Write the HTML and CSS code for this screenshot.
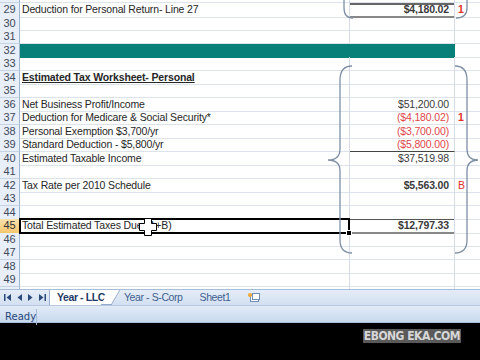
FILE: index.html
```html
<!DOCTYPE html>
<html lang="en">
<head>
    <meta charset="UTF-8">
    <title>Estimated Tax Worksheet</title>
    <link rel="stylesheet" href="styles.css">
</head>
<body>
    <div class="sheet">
        <div class="rows">
            <div class="row"><div class="rh"></div><div class="c a"></div><div class="c b"></div><div class="c x"></div></div>
            <div class="row"><div class="rh">29</div><div class="c a">Deduction for Personal Return- Line 27</div><div class="c b bold line-top2 line-bot2">$4,180.02</div><div class="c x red bold">1</div></div>
            <div class="row"><div class="rh">30</div><div class="c a"></div><div class="c b"></div><div class="c x"></div></div>
            <div class="row"><div class="rh">31</div><div class="c a"></div><div class="c b"></div><div class="c x"></div></div>
            <div class="row teal"><div class="rh">32</div><div class="c a"></div><div class="c b"></div><div class="c x"></div></div>
            <div class="row"><div class="rh">33</div><div class="c a"></div><div class="c b"></div><div class="c x"></div></div>
            <div class="row"><div class="rh">34</div><div class="c a bold under">Estimated Tax Worksheet- Personal</div><div class="c b"></div><div class="c x"></div></div>
            <div class="row"><div class="rh">35</div><div class="c a"></div><div class="c b"></div><div class="c x"></div></div>
            <div class="row"><div class="rh">36</div><div class="c a">Net Business Profit/Income</div><div class="c b">$51,200.00</div><div class="c x"></div></div>
            <div class="row"><div class="rh">37</div><div class="c a">Deduction for Medicare &amp; Social Security*</div><div class="c b neg">($4,180.02)</div><div class="c x red bold">1</div></div>
            <div class="row"><div class="rh">38</div><div class="c a">Personal Exemption $3,700/yr</div><div class="c b neg">($3,700.00)</div><div class="c x"></div></div>
            <div class="row"><div class="rh">39</div><div class="c a">Standard Deduction - $5,800/yr</div><div class="c b neg line-bot1">($5,800.00)</div><div class="c x"></div></div>
            <div class="row"><div class="rh">40</div><div class="c a">Estimated Taxable Income</div><div class="c b">$37,519.98</div><div class="c x"></div></div>
            <div class="row"><div class="rh">41</div><div class="c a"></div><div class="c b"></div><div class="c x"></div></div>
            <div class="row"><div class="rh">42</div><div class="c a">Tax Rate per 2010 Schedule</div><div class="c b bold">$5,563.00</div><div class="c x red">B</div></div>
            <div class="row"><div class="rh">43</div><div class="c a"></div><div class="c b"></div><div class="c x"></div></div>
            <div class="row"><div class="rh">44</div><div class="c a"></div><div class="c b"></div><div class="c x"></div></div>
            <div class="row active"><div class="rh">45</div><div class="c a selected">Total Estimated Taxes Due (A+B)</div><div class="c b bold line-top1 line-bot2">$12,797.33</div><div class="c x"></div></div>
            <div class="row"><div class="rh">46</div><div class="c a"></div><div class="c b"></div><div class="c x"></div></div>
            <div class="row"><div class="rh">47</div><div class="c a"></div><div class="c b"></div><div class="c x"></div></div>
            <div class="row"><div class="rh">48</div><div class="c a"></div><div class="c b"></div><div class="c x"></div></div>
            <div class="row"><div class="rh">49</div><div class="c a"></div><div class="c b"></div><div class="c x"></div></div>
            <div class="row"><div class="rh">50</div><div class="c a"></div><div class="c b"></div><div class="c x"></div></div>
        </div>

        <!-- hand-drawn braces and the mouse pointer -->
        <svg class="marks" width="480" height="289" viewBox="0 0 480 289">
            <g fill="none" stroke="#7f90a6" stroke-width="1.3">
                <path d="M344,-20 L344,8 Q344,18 353,18"/>
                <path d="M467,-20 L467,8 Q467,18 456,18"/>
                <path d="M352,66 Q340,66 340,80 L340,149 Q340,160 328,160 Q340,160 340,171 L340,240 Q340,253 352,253"/>
                <path d="M455,66 Q467,66 467,80 L467,149 Q467,160 478,160 Q467,160 467,171 L467,240 Q467,253 455,253"/>
            </g>
            <path class="cursor" d="M144.5,218.5 h7 v5 h5 v7 h-5 v5 h-7 v-5 h-5 v-7 h5 z"/>
        </svg>
    </div>

    <div class="tabbar">
        <div class="nav">
            <svg width="7" height="7" viewBox="0 0 7 7"><path d="M0,0 h1.5 v7 h-1.5 z M7,0 v7 l-4.5,-3.5 z"/></svg>
            <svg width="5" height="7" viewBox="0 0 5 7"><path d="M5,0 v7 l-4.5,-3.5 z"/></svg>
            <svg width="5" height="7" viewBox="0 0 5 7"><path d="M0,0 v7 l4.5,-3.5 z"/></svg>
            <svg width="7" height="7" viewBox="0 0 7 7"><path d="M0,0 v7 l4.5,-3.5 z M5.5,0 h1.5 v7 h-1.5 z"/></svg>
        </div>
        <div class="tabs">
            <div class="tab current">Year - LLC</div>
            <div class="tab">Year - S-Corp</div>
            <div class="tab">Sheet1</div>
            <div class="tab add">
                <svg width="13" height="11" viewBox="0 0 13 11">
                    <rect x="3.5" y="3.5" width="8" height="6" fill="#fff" stroke="#6f8cb2"/>
                    <rect x="5.5" y="1.5" width="7" height="6" fill="#fff" stroke="#6f8cb2"/>
                    <circle cx="3" cy="3" r="2" fill="#f0a830"/>
                </svg>
            </div>
        </div>
    </div>

    <div class="status">
        <span class="ready">Ready</span>
    </div>

    <div class="letterbox">
        <span class="watermark">EBONG EKA.COM</span>
    </div>
</body>
</html>
```

FILE: styles.css
```css
body {
    margin: 0;
    width: 480px;
    height: 360px;
    overflow: hidden;
    background-color: black;
    font-family: "Liberation Sans", Arial, sans-serif;
}

.sheet {
    position: relative;
    height: 289px;
    overflow: hidden;
    background-color: white;
}

.rows {
    margin-top: -10.5px;
}

.row {
    display: grid;
    grid-template-columns: 20px 330px 105px 25px;
    height: 13.5px;
}

.rh {
    box-sizing: border-box;
    background-color: #e9eff8;
    border-right: 1px solid #9eb6ce;
    border-bottom: 1px solid #c5d3e4;
    color: #3e4a5c;
    font-size: 11px;
    line-height: 13px;
    text-align: center;
}

.c {
    box-sizing: border-box;
    border-bottom: 1px solid #dde3ec;
    color: #262626;
    font-size: 10.5px;
    letter-spacing: -0.15px;
    line-height: 12.5px;
    white-space: nowrap;
}

.a {
    padding-left: 2px;
    border-right: 1px solid #d6dce6;
}

.b {
    padding-right: 5px;
    text-align: right;
    border-right: 1px solid #d6dce6;
    color: #3a3a3a;
}

.x {
    padding-left: 3px;
}

.bold {
    font-weight: bold;
}

.under {
    text-decoration: underline;
}

.red {
    color: #e0302c;
}

.neg {
    color: #e0474a;
}

.line-top1 {
    box-shadow: inset 0 1px 0 #555;
}

.line-top2 {
    box-shadow: inset 0 2px 0 #666;
}

.line-bot1 {
    border-bottom-color: #444;
}

.line-bot2 {
    border-bottom: 2px solid #888;
}

.teal .a,
.teal .b {
    background-color: #07807a;
    border-color: #07807a;
}

.active .rh {
    background: linear-gradient(#fbe2ad, #f4c66e);
    color: #333;
}

.selected {
    position: relative;
}

.selected::after {
    content: "";
    position: absolute;
    top: -1px;
    left: -1px;
    right: -1px;
    bottom: -1px;
    border: 2px solid #000;
}

.selected::before {
    content: "";
    position: absolute;
    right: -3px;
    bottom: -3px;
    width: 4px;
    height: 4px;
    background-color: #000;
    border: 1px solid #fff;
    z-index: 1;
}

.marks {
    position: absolute;
    top: 0;
    left: 0;
    pointer-events: none;
}

.cursor {
    fill: #fff;
    stroke: #000;
    stroke-width: 1;
}

/* sheet tabs */
.tabbar {
    display: flex;
    height: 17px;
    box-sizing: border-box;
    background: linear-gradient(#e4ecf7, #d3e0f1);
    border-top: 1px solid #a7bcd6;
    border-bottom: 1px solid #b6c8df;
}

.nav {
    display: flex;
    align-items: center;
    gap: 6px;
    width: 50px;
    box-sizing: border-box;
    padding-left: 4px;
    border-right: 1px solid #9db3cf;
}

.nav svg {
    fill: #2a4a7c;
}

.tabs {
    display: flex;
    font-family: "Liberation Sans", Arial, sans-serif;
    font-size: 10.5px;
    letter-spacing: -0.4px;
}

.tab {
    position: relative;
    padding: 0 5px 0 12px;
    line-height: 15px;
    color: #3f5f8f;
}

.tab::before {
    content: "";
    position: absolute;
    top: 0;
    bottom: 0;
    left: 4px;
    right: -4px;
    border-left: 1px solid #92aacb;
    border-bottom: 1px solid #92aacb;
    transform: skewX(-30deg);
    z-index: -1;
}

.tab.current {
    padding: 0 5px 0 7px;
    margin-right: 2px;
    font-weight: bold;
    color: #1f3a66;
    background-color: white;
    z-index: 1;
}

.tab.current::before {
    left: auto;
    width: 10px;
    right: -6px;
    border-left: none;
    border-right: 1px solid #92aacb;
    background-color: white;
    z-index: 0;
}

.tab.add {
    padding: 2px 8px 0 12px;
    line-height: 0;
}

/* status bar */
.status {
    height: 16px;
    background: linear-gradient(#e2ebf7, #c8d9ee);
    border-bottom: 1px solid #a9bed9;
}

.ready {
    display: inline-block;
    width: 31px;
    padding-left: 5px;
    border-right: 1px solid #a7bcd8;
    font-family: "DejaVu Sans", "Noto Sans", sans-serif;
    font-size: 10px;
    line-height: 16px;
    color: #26467a;
}

.letterbox {
    display: flex;
    justify-content: flex-end;
    padding: 6px 19px 0 0;
}

.watermark {
    background-color: #5a5a5a;
    color: #d6d6d6;
    font-family: "DejaVu Sans Condensed", "DejaVu Sans", sans-serif;
    font-weight: bold;
    font-size: 12px;
    letter-spacing: -0.5px;
    line-height: 14px;
    padding: 0 1px;
}
```
